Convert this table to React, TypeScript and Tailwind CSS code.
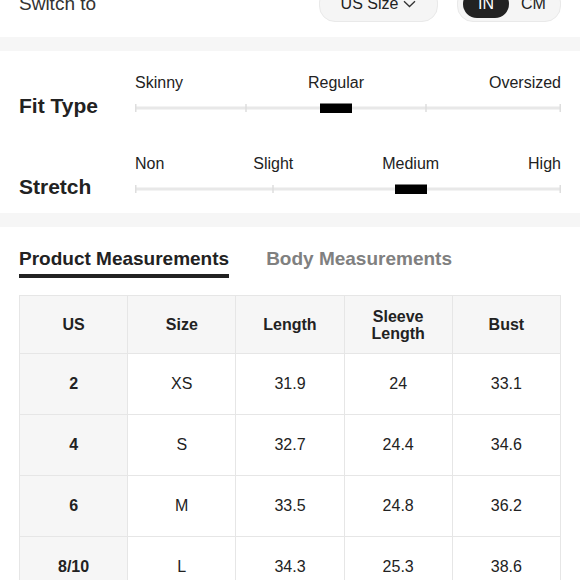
import React from "react";

const font = { fontFamily: '"Liberation Sans", Arial, Helvetica, sans-serif' };

function Track({ ticks, marker }: { ticks: number[]; marker: number }) {
  return (
    <svg width="426" height="12" viewBox="0 0 426 12" className="block">
      <line x1="0" y1="6" x2="426" y2="6" stroke="#e8e8e8" strokeWidth="3" />
      {ticks.map((t, i) => (
        <line key={i} x1={t} y1="2" x2={t} y2="10" stroke="#dedede" strokeWidth="1.5" />
      ))}
      <rect x={marker} y="1.5" width="32" height="9.5" fill="#000" />
    </svg>
  );
}

function FitRow({
  title,
  labels,
  ticks,
  marker,
}: {
  title: string;
  labels: string[];
  ticks: number[];
  marker: number;
}) {
  return (
    <div className="flex h-[41px]">
      <div className="w-[116px] pt-[21px] text-[21px] leading-[24px] font-bold text-[#222] whitespace-nowrap">{title}</div>
      <div className="w-[426px]">
        <div className="flex justify-between text-[16px] leading-[20px] text-[#222]">
          {labels.map((l) => (
            <span key={l}>{l}</span>
          ))}
        </div>
        <div className="mt-[9px]">
          <Track ticks={ticks} marker={marker} />
        </div>
      </div>
    </div>
  );
}

const rows = [
  ["2", "XS", "31.9", "24", "33.1"],
  ["4", "S", "32.7", "24.4", "34.6"],
  ["6", "M", "33.5", "24.8", "36.2"],
  ["8/10", "L", "34.3", "25.3", "38.6"],
];

export default function App() {
  return (
    <div className="w-[580px] h-[580px] overflow-hidden bg-white text-[#222]" style={font}>
      {/* Top switch bar */}
      <div className="flex items-center px-[19px] mt-[-14px] pb-[15px]">
        <span className="text-[19px] leading-[24px] text-[#333]">Switch to</span>
        <div className="ml-auto flex items-center gap-[19px]">
          <div className="h-[36px] w-[119px] rounded-[16px] bg-[#f5f5f5] border border-[#e9e9e9] flex items-center justify-center gap-[5px] text-[16px]">
            <span>US Size</span>
            <svg width="13" height="8" viewBox="0 0 13 8" fill="none">
              <path d="M1 1.2L6.5 6.5L12 1.2" stroke="#333" strokeWidth="1.3" />
            </svg>
          </div>
          <div className="h-[36px] w-[104px] rounded-[16px] bg-[#f5f5f5] border border-[#e9e9e9] flex items-center pl-[5px] text-[16px]">
            <div className="h-[28px] w-[46px] rounded-[14px] bg-[#222] text-white flex items-center justify-center">IN</div>
            <div className="flex-1 text-center pr-[2px]">CM</div>
          </div>
        </div>
      </div>
      <div className="h-[14px] bg-[#f6f6f6]" />

      {/* Fit type / stretch */}
      <div className="px-[19px] pt-[22px] pb-[18px] flex flex-col gap-[40px]">
        <FitRow title="Fit Type" labels={["Skinny", "Regular", "Oversized"]} ticks={[0.75, 111, 291, 425.25]} marker={185} />
        <FitRow title="Stretch" labels={["Non", "Slight", "Medium", "High"]} ticks={[0.75, 138, 425.25]} marker={260} />
      </div>
      <div className="h-[14px] bg-[#f6f6f6]" />

      {/* Tabs */}
      <div className="px-[19px] pt-[20px]">
        <div className="flex gap-[37px] text-[19px] leading-[24px] font-bold">
          <div className="flex flex-col">
            <span className="text-[#222]">Product Measurements</span>
            <div className="mt-[3px] h-[4px] bg-[#222]" />
          </div>
          <span className="text-[#808080]">Body Measurements</span>
        </div>

        <table className="mt-[17px] w-[542px] table-fixed border-collapse text-[16px]">
          <thead>
            <tr className="bg-[#f6f6f6]">
              {["US", "Size", "Length", "Sleeve Length", "Bust"].map((h) => (
                <th key={h} className="h-[58px] border border-[#e6e6e6] font-bold text-center leading-[17px] px-2">
                  {h === "Sleeve Length" ? (
                    <>
                      Sleeve
                      <br />
                      Length
                    </>
                  ) : (
                    h
                  )}
                </th>
              ))}
            </tr>
          </thead>
          <tbody>
            {rows.map((r) => (
              <tr key={r[0]}>
                {r.map((c, i) => (
                  <td
                    key={i}
                    className={
                      "h-[61px] border border-[#e6e6e6] text-center " +
                      (i === 0 ? "bg-[#f6f6f6] font-bold" : "bg-white")
                    }
                  >
                    {c}
                  </td>
                ))}
              </tr>
            ))}
          </tbody>
        </table>
      </div>
    </div>
  );
}
